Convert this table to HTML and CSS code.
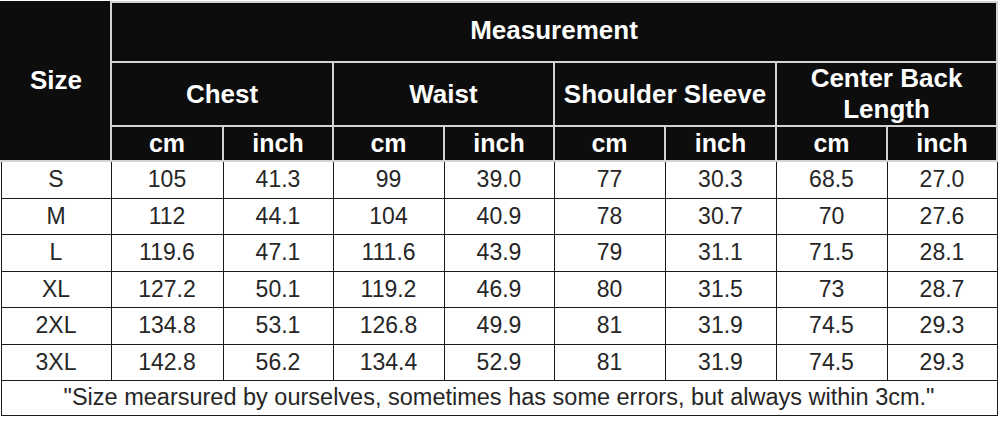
FILE: index.html
```html
<!DOCTYPE html>
<html>
<head>
<meta charset="utf-8">
<link rel="stylesheet" href="styles.css">
</head>
<body>
<table class="sizes">
  <colgroup>
    <col class="c110"><col class="c112"><col class="c110"><col class="c111"><col class="c110"><col class="c111"><col class="c111"><col class="c111"><col class="c110">
  </colgroup>
  <thead>
    <tr class="h1">
      <th rowspan="3" class="size">Size</th>
      <th colspan="8">Measurement</th>
    </tr>
    <tr class="h2">
      <th colspan="2">Chest</th>
      <th colspan="2">Waist</th>
      <th colspan="2">Shoulder Sleeve</th>
      <th colspan="2" class="two">Center Back<br>Length</th>
    </tr>
    <tr class="h3">
      <th>cm</th><th>inch</th><th>cm</th><th>inch</th><th>cm</th><th>inch</th><th>cm</th><th>inch</th>
    </tr>
  </thead>
  <tbody>
    <tr><td>S</td><td>105</td><td>41.3</td><td>99</td><td>39.0</td><td>77</td><td>30.3</td><td>68.5</td><td>27.0</td></tr>
    <tr><td>M</td><td>112</td><td>44.1</td><td>104</td><td>40.9</td><td>78</td><td>30.7</td><td>70</td><td>27.6</td></tr>
    <tr><td>L</td><td>119.6</td><td>47.1</td><td>111.6</td><td>43.9</td><td>79</td><td>31.1</td><td>71.5</td><td>28.1</td></tr>
    <tr><td>XL</td><td>127.2</td><td>50.1</td><td>119.2</td><td>46.9</td><td>80</td><td>31.5</td><td>73</td><td>28.7</td></tr>
    <tr><td>2XL</td><td>134.8</td><td>53.1</td><td>126.8</td><td>49.9</td><td>81</td><td>31.9</td><td>74.5</td><td>29.3</td></tr>
    <tr><td>3XL</td><td>142.8</td><td>56.2</td><td>134.4</td><td>52.9</td><td>81</td><td>31.9</td><td>74.5</td><td>29.3</td></tr>
    <tr class="note"><td colspan="9">"Size mearsured by ourselves, sometimes has some errors, but always within 3cm."</td></tr>
  </tbody>
</table>
</body>
</html>
```
FILE: styles.css
```css
html, body {
  margin: 0;
  padding: 0;
  background: #ffffff;
}
body {
  padding-top: 1px;
  font-family: "Liberation Sans", Arial, sans-serif;
}
.sizes {
  border-collapse: collapse;
  table-layout: fixed;
  width: 996px;
}
.c110 { width: 110px; }
.c111 { width: 111px; }
.c112 { width: 112px; }
.sizes th {
  background: #0d0d0d;
  color: #ffffff;
  font-weight: bold;
  font-size: 25px;
  border: 2px solid #d4d4d4;
  padding: 0;
  text-align: center;
  vertical-align: middle;
  line-height: 1.1;
}
.sizes th.size {
  border-left-color: #0d0d0d;
  border-top-color: #0d0d0d;
}
.h1 { height: 60px; }
.h1 th { font-size: 26px; padding-bottom: 3px; }
.h2 { height: 62px; }
.h2 th { font-size: 26px; }
.h2 th.two { line-height: 31px; }
.h3 { height: 35px; }
.sizes td {
  border: 1.5px solid #1a1a1a;
  color: #262626;
  font-size: 23px;
  text-align: center;
  vertical-align: middle;
  padding: 0;
  height: 35.5px;
  line-height: 1;
}
.sizes tr.note td {
  height: 33.5px;
  font-size: 23.5px;
}
```
